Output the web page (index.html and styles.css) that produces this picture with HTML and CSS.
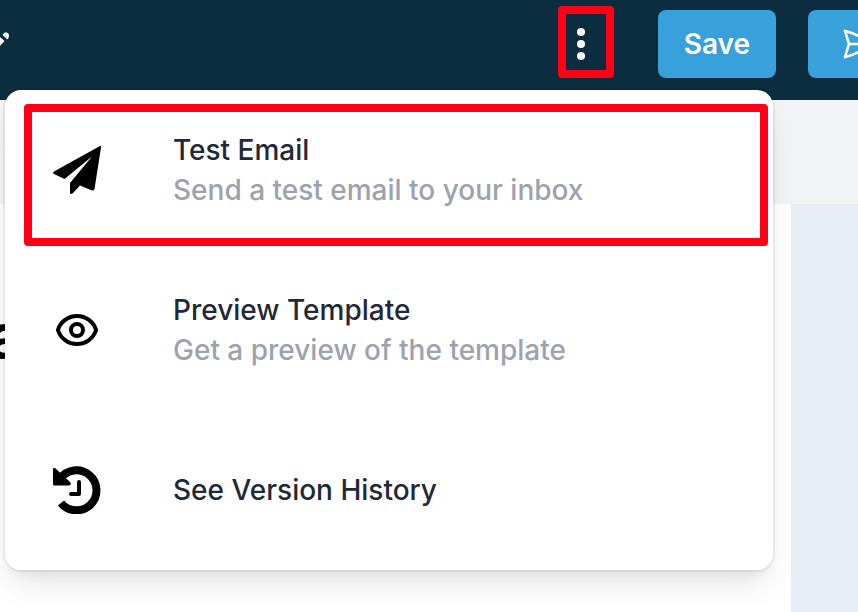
FILE: index.html
```html
<!DOCTYPE html>
<html lang="en">
<head>
    <meta charset="UTF-8">
    <meta name="viewport" content="width=device-width, initial-scale=1.0">
    <title>Template Editor</title>
    <link rel="stylesheet" href="styles.css">
</head>
<body>

<header class="topbar">
    <button class="edit-button" type="button" aria-label="Rename">
        <svg width="10" height="20" viewBox="0 0 10 20" fill="#fff">
            <path d="M-10 18L0 8L4.500 12L-5 22z"/>
            <path d="M2.500 6Q4 3.300 6 3.300Q9 4 9 7Q8.700 9 7.500 10.500z"/>
        </svg>
    </button>
    <div class="actions">
        <button class="more-button highlight" type="button" aria-label="More options">
            <svg width="8" height="32" viewBox="0 0 8 32" fill="#fff">
                <circle cx="4" cy="4" r="4"/>
                <circle cx="4" cy="16" r="4"/>
                <circle cx="4" cy="28" r="4"/>
            </svg>
        </button>
        <button class="button" type="button">Save</button>
        <button class="button send-button" type="button" aria-label="Send">
            <svg width="36" height="36" viewBox="0 0 24 24" fill="none" stroke="#fff" stroke-width="1.700" stroke-linecap="round" stroke-linejoin="round">
                <path d="M6 12L3.269 3.126A59.768 59.768 0 0121.485 12 59.770 59.770 0 013.270 20.876L5.999 12zm0 0h7.500"/>
            </svg>
        </button>
    </div>

    <nav class="menu">
        <button class="menu-item" type="button">
            <span class="menu-icon">
                <svg width="48" height="48" viewBox="0 0 48 48">
                    <path d="M47 0L1 25.500Q-1 27 1 28L11.500 33L39 10.500L17 37V47Q18 49 20 47L27 39.500L39 44.500Q41 45 41.500 43L48 1.500Q48.200 0 47 0z"/>
                </svg>
            </span>
            <span class="menu-text">
                <span class="menu-title">Test Email</span>
                <span class="menu-note">Send a test email to your inbox</span>
            </span>
            <span class="item-frame highlight"></span>
        </button>
        <button class="menu-item" type="button">
            <span class="menu-icon">
                <svg width="48" height="48" viewBox="0 0 24 24" fill="none" stroke="#000" stroke-width="2" stroke-linejoin="round">
                    <path d="M15 12a3 3 0 11-6 0 3 3 0 016 0z"/>
                    <path d="M2.458 12C3.732 7.943 7.523 5 12 5c4.478 0 8.268 2.943 9.542 7-1.274 4.057-5.064 7-9.542 7-4.477 0-8.268-2.943-9.542-7z"/>
                </svg>
            </span>
            <span class="menu-text">
                <span class="menu-title">Preview Template</span>
                <span class="menu-note">Get a preview of the template</span>
            </span>
        </button>
        <button class="menu-item" type="button">
            <span class="menu-icon">
                <svg width="48" height="48" viewBox="0 0 48 48">
                    <path d="M7 13A20 20 0 1 1 8 37" fill="none" stroke="#000" stroke-width="8"/>
                    <path d="M0 3Q.500 1 2.500 2.500L17 16Q19 19 16 19.500H1.500Q0 19.500 0 18z"/>
                    <path d="M26 16V28H18" fill="none" stroke="#000" stroke-width="4" stroke-linecap="round" stroke-linejoin="round"/>
                </svg>
            </span>
            <span class="menu-text">
                <span class="menu-title">See Version History</span>
            </span>
        </button>
    </nav>
</header>

<div class="subbar"></div>

<main class="editor">
    <section class="canvas">
        <h1 class="heading">a</h1>
    </section>
    <aside class="side-panel"></aside>
</main>

</body>
</html>
```
FILE: styles.css
```css
* {
    box-sizing: border-box;
}
body {
    margin: 0;
    min-height: 100vh;
    display: flex;
    flex-direction: column;
    overflow: hidden;
    font-family: Inter, sans-serif;
    font-size: 28px;
    line-height: 40px;
    background-color: #fff;
}
button {
    padding: 0;
    border: none;
    background: none;
    font: inherit;
    cursor: pointer;
}
svg {
    display: block;
}

/* top bar */
.topbar {
    position: relative;
    display: flex;
    justify-content: space-between;
    align-items: flex-start;
    height: 100px;
    background-color: #0c2d3f;
}
.edit-button {
    margin-top: 29px;
}
.actions {
    display: flex;
    align-items: flex-start;
    gap: 32px;
    padding-top: 10px;
    margin-right: -132px;
}
.highlight {
    border: 8px solid #ff0016;
    border-radius: 4px;
}
.more-button {
    width: 56px;
    height: 72px;
    margin: -4px 12px 0 0;
    padding: 6px 11px 2px;
}
.button {
    height: 68px;
    padding: 0 26px;
    border-radius: 8px;
    background-color: #38a0db;
    color: #fff;
    font-weight: 600;
}
.send-button {
    width: 182px;
    padding: 0 32px;
}

/* dropdown */
.menu {
    position: absolute;
    top: 90px;
    right: 85px;
    z-index: 1;
    width: 768px;
    display: flex;
    flex-direction: column;
    gap: 64px;
    padding: 32px 24px;
    border-radius: 16px;
    background-color: #fff;
    box-shadow: 0 0 0 2px rgba(0, 0, 0, 0.05), 0 20px 30px -6px rgba(0, 0, 0, 0.1), 0 8px 12px -4px rgba(0, 0, 0, 0.05);
}
.menu-item {
    position: relative;
    display: flex;
    align-items: center;
    gap: 48px;
    text-align: left;
}
.menu-icon {
    display: flex;
    align-items: center;
    justify-content: center;
    width: 96px;
    height: 96px;
}
.menu-text {
    display: flex;
    flex-direction: column;
    font-weight: 500;
}
.menu-title {
    color: #1f2937;
}
.menu-note {
    color: #9ca3af;
}
.item-frame {
    position: absolute;
    top: -18px;
    right: -19px;
    bottom: -28px;
    left: -5px;
}

/* page below the bar */
.subbar {
    height: 104px;
    background-color: #f1f3f5;
}
.editor {
    flex: 1;
    display: grid;
    grid-template-columns: 1fr 67px;
}
.canvas {
    padding-top: 96px;
    overflow: hidden;
}
.heading {
    margin: 0 0 0 -12px;
    font-size: 62px;
    font-weight: 700;
    line-height: 72px;
}
.side-panel {
    background-color: #e8edf5;
}
```
